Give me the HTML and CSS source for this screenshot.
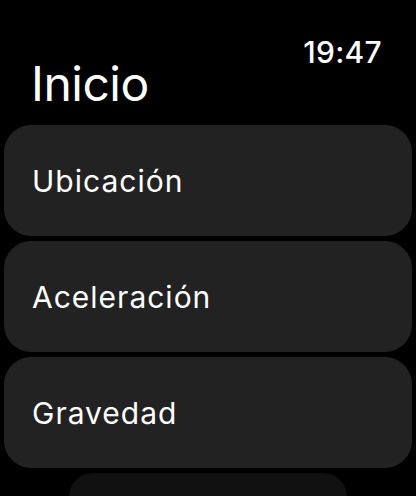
FILE: index.html
```html
<!DOCTYPE html>
<html lang="es">
<head>
<meta charset="utf-8">
<link rel="stylesheet" href="styles.css">
</head>
<body>
<div class="screen">
  <header class="header">
    <h1 class="title">Inicio</h1>
    <div class="time">19:47</div>
  </header>
  <div class="list">
    <div class="card"><span class="label">Ubicación</span></div>
    <div class="card"><span class="label">Aceleración</span></div>
    <div class="card"><span class="label">Gravedad</span></div>
    <div class="more"></div>
  </div>
</div>
</body>
</html>
```
FILE: styles.css
```css
* { box-sizing: border-box; }
html, body {
  margin: 0;
  padding: 0;
  background: #000;
  width: 416px;
  height: 496px;
  overflow: hidden;
  font-family: Inter, "Noto Sans", sans-serif;
  color: #fff;
}
.screen {
  display: flex;
  flex-direction: column;
}
.header {
  display: flex;
  justify-content: space-between;
  align-items: flex-start;
  padding: 34px 34px 0 31px;
  height: 125px;
}
.title {
  margin: 26px 0 0 0;
  font-size: 48px;
  font-weight: 400;
  line-height: 1;
  letter-spacing: -0.5px;
}
.time {
  font-size: 30px;
  font-weight: 500;
  line-height: 1;
  margin-top: 3px;
  letter-spacing: 0.3px;
}
.list {
  display: flex;
  flex-direction: column;
  gap: 5px;
  padding: 0 4px;
}
.card {
  height: 111px;
  background: #222222;
  border-radius: 27px;
  display: flex;
  align-items: center;
  padding-left: 28px;
}
.label {
  font-size: 30px;
  font-weight: 400;
  letter-spacing: 1px;
}
.more {
  align-self: center;
  width: 278px;
  height: 24px;
  background: #111111;
  border-radius: 27px 27px 0 0;
}
```
